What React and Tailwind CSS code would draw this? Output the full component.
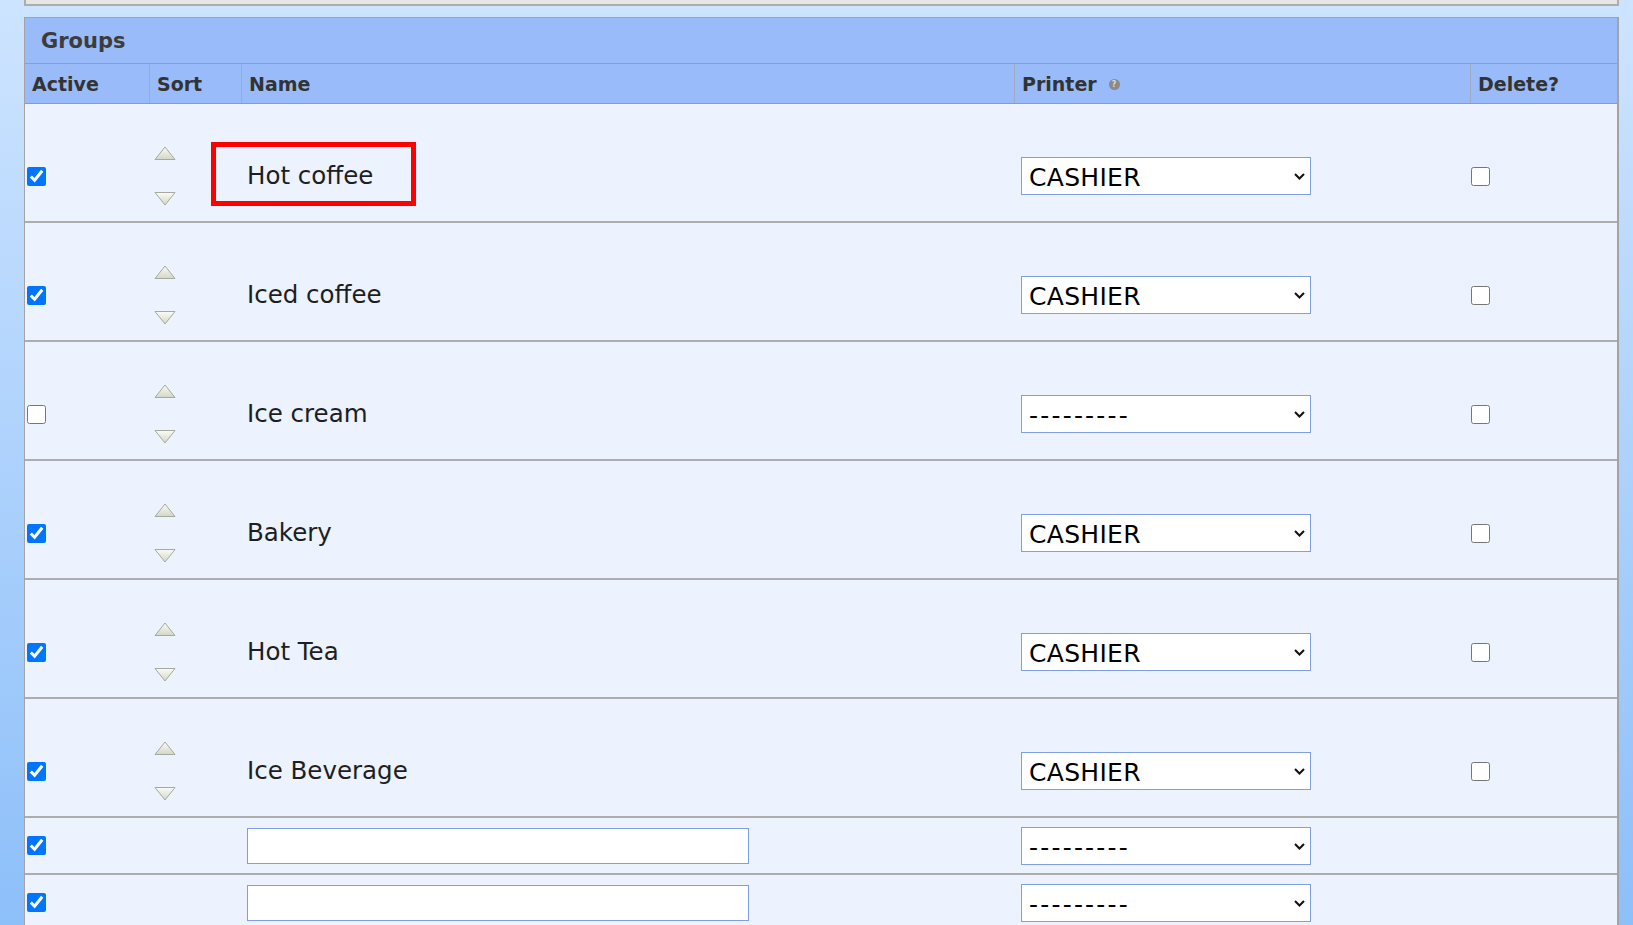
import React from 'react';

const rows = [
    { name: 'Hot coffee', active: true, printer: 'CASHIER' },
    { name: 'Iced coffee', active: true, printer: 'CASHIER' },
    { name: 'Ice cream', active: false, printer: '' },
    { name: 'Bakery', active: true, printer: 'CASHIER' },
    { name: 'Hot Tea', active: true, printer: 'CASHIER' },
    { name: 'Ice Beverage', active: true, printer: 'CASHIER' },
];

const cols = 'grid grid-cols-[125px_92px_773px_456px_1fr]';

function Arrow({ down }) {
    const id = down ? 'gdown' : 'gup';
    return (
        <svg width="22" height="15" viewBox="0 0 22 15" className="block">
            <defs>
                <linearGradient id={id} x1="0" y1="0" x2="0" y2="1">
                    <stop offset="0" stopColor="#fbfbf7" />
                    <stop offset="1" stopColor="#d3d7c6" />
                </linearGradient>
            </defs>
            <polygon
                points={down ? '1,1.5 21,1.5 11,14' : '11,1 21,13.5 1,13.5'}
                fill={`url(#${id})`}
                stroke="#a6a99d"
                strokeWidth="1"
            />
        </svg>
    );
}

function Select({ value }) {
    return (
        <div className="relative h-[38px] w-[290px] border border-[#7f9fe2] bg-white">
            <div className="flex h-full items-center pl-[7px] pt-[3px] text-[25px] leading-none text-black">
                {value ? <span className="tracking-[0.3px]">{value}</span> : <span className="tracking-[2.2px]">---------</span>}
            </div>
            <svg width="11" height="7" viewBox="0 0 11 7" className="absolute right-[5px] top-[15px]">
                <path d="M1 1 L5.5 5.5 L10 1" fill="none" stroke="#111" strokeWidth="2" />
            </svg>
        </div>
    );
}

function Check({ checked, className = '' }) {
    return (
        <input
            type="checkbox"
            defaultChecked={checked}
            className={`m-0 h-[19px] w-[19px] accent-[#0075ff] ${className}`}
        />
    );
}

export default function App() {
    return (
        <div className="relative h-[925px] w-full overflow-hidden bg-gradient-to-b from-[#cde4ff] to-[#8dbff9] font-['DejaVu_Sans',sans-serif]">
            <div className="ml-[24px] h-[6px] w-[1595px] border-x-2 border-b-2 border-[#adadad] bg-[#e6e6e6]" />

            <div className="ml-[24px] mt-[11px] w-[1595px] border-l border-r-2 border-t border-[#a3a3a3] bg-[#ecf2fe]">
                <div className="flex h-[46px] items-center border-b border-[#8c9fc6] bg-[#99bbf9] pl-[16px] pt-[3px] text-[21px] font-bold text-[#3c3c3c]">
                    Groups
                </div>
                <div className={`${cols} h-[40px] border-b border-[#9a9a9a] bg-[#99bbf9] text-[19px] font-bold text-[#333]`}>
                    <div className="flex items-center border-r border-[#a0aac0] pl-[7px] pt-[2px]">Active</div>
                    <div className="flex items-center border-r border-[#a0aac0] pl-[7px] pt-[2px]">Sort</div>
                    <div className="flex items-center border-r border-[#a0aac0] pl-[7px] pt-[2px]">Name</div>
                    <div className="flex items-center border-r border-[#a0aac0] pl-[7px] pt-[2px]">
                        Printer
                        <span className="ml-[12px] flex h-[11px] w-[11px] items-center justify-center rounded-full bg-[#8a8a8a] text-[8px] leading-none text-[#d8d8d8]">
                            ?
                        </span>
                    </div>
                    <div className="flex items-center pl-[7px] pt-[2px]">Delete?</div>
                </div>

                {rows.map((r) => (
                    <div key={r.name} className={`${cols} h-[119px] border-b-2 border-[#adadad] pt-[27px]`}>
                        <div className="flex items-center pl-[2px]">
                            <Check checked={r.active} />
                        </div>
                        <div className="flex flex-col justify-center gap-[30px] pl-[4px]">
                            <Arrow />
                            <Arrow down />
                        </div>
                        <div className="flex items-center pl-[5px] text-[24.5px] text-[#1e1e1e]">{r.name}</div>
                        <div className="flex items-center pl-[6px]">
                            <Select value={r.printer} />
                        </div>
                        <div className="flex items-center">
                            <Check checked={false} />
                        </div>
                    </div>
                ))}

                {[0, 1].map((i) => (
                    <div key={i} className={`${cols} h-[57px] border-b-2 border-[#adadad]`}>
                        <div className="flex items-center pl-[2px]">
                            <Check checked />
                        </div>
                        <div />
                        <div className="flex items-center pl-[5px]">
                            <input type="text" className="h-[36px] w-[502px] border border-[#7f9fe2] bg-white outline-none" />
                        </div>
                        <div className="flex items-center pl-[6px]">
                            <Select value="" />
                        </div>
                        <div />
                    </div>
                ))}
            </div>

            <div className="absolute left-[211px] top-[142px] h-[64px] w-[205px] border-[5px] border-[#ff0000]" />
        </div>
    );
}
